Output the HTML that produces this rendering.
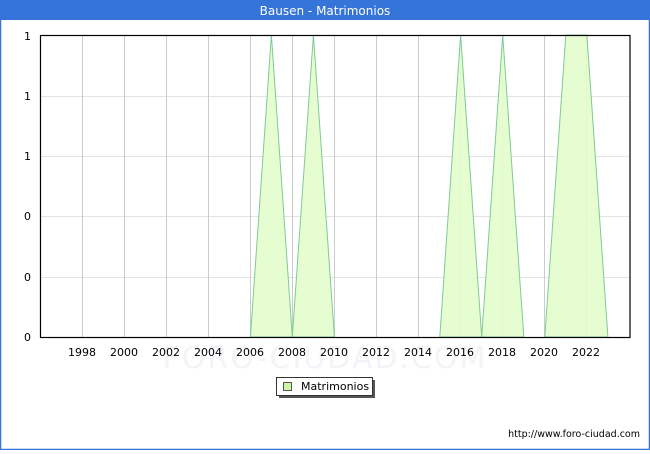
<!DOCTYPE html>
<html><head><meta charset="utf-8"><style>
html,body{margin:0;padding:0;background:#fff;}
body{width:650px;height:450px;overflow:hidden;font-family:"DejaVu Sans","Liberation Sans",sans-serif;}
</style></head><body>
<svg width="650" height="450" xmlns="http://www.w3.org/2000/svg" font-family="DejaVu Sans, Liberation Sans, sans-serif">
<rect x="0.5" y="0.5" width="649" height="449" fill="#fff" stroke="#3574d8" stroke-width="1.5"/>
<rect x="0" y="0" width="650" height="20" fill="#3574d8"/>
<text x="325" y="15" font-size="12" fill="#fff" text-anchor="middle">Bausen - Matrimonios</text>
<text x="325" y="368" font-size="30" fill="#f3f3f8" text-anchor="middle" letter-spacing="2">FORO-CIUDAD.COM</text>
<g stroke="#e4e4e4" stroke-width="1">
<line x1="40" y1="96.5" x2="630" y2="96.5"/><line x1="40" y1="156.5" x2="630" y2="156.5"/>
<line x1="40" y1="216.5" x2="630" y2="216.5"/><line x1="40" y1="277.5" x2="630" y2="277.5"/>
</g>
<g stroke="#cccccc" stroke-width="1">
<line x1="82.5" y1="35" x2="82.5" y2="337"/><line x1="124.5" y1="35" x2="124.5" y2="337"/><line x1="166.5" y1="35" x2="166.5" y2="337"/><line x1="208.5" y1="35" x2="208.5" y2="337"/><line x1="250.5" y1="35" x2="250.5" y2="337"/><line x1="292.5" y1="35" x2="292.5" y2="337"/><line x1="334.5" y1="35" x2="334.5" y2="337"/><line x1="376.5" y1="35" x2="376.5" y2="337"/><line x1="418.5" y1="35" x2="418.5" y2="337"/><line x1="460.5" y1="35" x2="460.5" y2="337"/><line x1="502.5" y1="35" x2="502.5" y2="337"/><line x1="544.5" y1="35" x2="544.5" y2="337"/><line x1="586.5" y1="35" x2="586.5" y2="337"/>
</g>
<polygon points="250.4,337 271.4,35 292.3,337 313.4,35 334.4,337" fill="#e3fccc" fill-opacity="0.9" stroke="#7ecb95" stroke-width="1"/>
<polygon points="439.8,337 460.6,35 481.7,337 502.7,35 523.8,337" fill="#e3fccc" fill-opacity="0.9" stroke="#7ecb95" stroke-width="1"/>
<polygon points="544.8,337 565.8,35 586.9,35 607.9,337" fill="#e3fccc" fill-opacity="0.9" stroke="#7ecb95" stroke-width="1"/>
<rect x="40.5" y="35.5" width="589.5" height="302" fill="none" stroke="#000" stroke-width="1.2"/>
<g font-size="11" fill="#000" text-anchor="end">
<text x="31" y="40">1</text><text x="31" y="100">1</text><text x="31" y="160">1</text><text x="31" y="220">0</text><text x="31" y="281">0</text><text x="31" y="341">0</text>
</g>
<g font-size="11" fill="#000" text-anchor="middle">
<text x="82" y="356">1998</text><text x="124" y="356">2000</text><text x="166" y="356">2002</text><text x="208" y="356">2004</text><text x="250" y="356">2006</text><text x="292" y="356">2008</text><text x="334" y="356">2010</text><text x="376" y="356">2012</text><text x="418" y="356">2014</text><text x="460" y="356">2016</text><text x="502" y="356">2018</text><text x="544" y="356">2020</text><text x="586" y="356">2022</text>
</g>
<rect x="279" y="380" width="96" height="18" fill="#555"/>
<rect x="276.5" y="377.5" width="96" height="18" fill="#fff" stroke="#333" stroke-width="1"/>
<rect x="283.5" y="382.5" width="8" height="8" fill="#ccf5a8" stroke="#555" stroke-width="1"/>
<text x="301" y="390" font-size="11" fill="#000">Matrimonios</text>
<text x="640" y="437" font-size="9.5" fill="#000" text-anchor="end">http://www.foro-ciudad.com</text>
</svg>
</body></html>
